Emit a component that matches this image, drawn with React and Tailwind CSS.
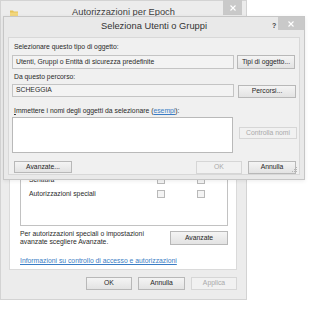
import React from 'react';

function Btn({ children, className = '', disabled }) {
  return (
    <div
      className={`flex shrink-0 items-center justify-center border text-[6.8px] leading-none ${
        disabled
          ? 'border-[#d6d6d6] bg-[#f1f1f1] text-[#a9a9a9]'
          : 'border-[#b8b8b8] bg-gradient-to-b from-[#f4f4f4] to-[#e3e3e3] text-[#262626]'
      } ${className}`}
    >
      {children}
    </div>
  );
}

function Close({ className = '' }) {
  return (
    <div className={`absolute flex items-center justify-center bg-[#c9c9c9] ${className}`}>
      <svg width="6" height="6" viewBox="0 0 6 6">
        <path d="M0.5 0.5 L5.5 5.5 M5.5 0.5 L0.5 5.5" stroke="#fff" strokeWidth="1.1" />
      </svg>
    </div>
  );
}

function Check() {
  return <div className="h-[8px] w-[8px] border border-[#b9b9b9] bg-[#f4f4f4]" />;
}

export default function App() {
  return (
    <div className="relative h-[320px] w-[319px] overflow-hidden bg-white font-['Liberation_Sans',Arial,sans-serif] text-[#2a2a2a]">
      {/* back window */}
      <div className="absolute left-0 top-0 flex h-[300px] w-[247px] flex-col border border-[#d3d3d3] bg-[#ececec]">
        <div className="relative flex h-[23px] shrink-0 items-center justify-center">
          <svg className="absolute left-[9px] top-[8px]" width="8" height="8" viewBox="0 0 8 8">
            <path d="M0 1.5 H3 L3.8 2.5 H8 V8 H0 Z" fill="#e6c35a" />
            <path d="M0 3.5 H8 V8 H0 Z" fill="#f2d77e" />
          </svg>
          <span className="text-[9.3px] leading-none text-[#3d3d3d]">Autorizzazioni per Epoch</span>
          <Close className="right-[4px] top-[-1px] h-[15px] w-[19px]" />
        </div>

        <div className="ml-[8px] flex h-[246px] w-[228px] flex-col border border-[#dadada] bg-white">
          <div className="ml-[10px] mt-[95px] flex h-[106px] w-[208px] flex-col justify-end border border-[#c2c2c2] pb-[24px]">
            {['Scrittura', 'Autorizzazioni speciali'].map(r => (
              <div key={r} className="grid h-[14px] grid-cols-[136px_40px_1fr] items-center">
                <span className="pl-[8px] text-[6.8px] leading-none">{r}</span>
                <Check />
                <Check />
              </div>
            ))}
          </div>
          <div className="ml-[10px] mt-[4px] flex w-[208px] items-start justify-between">
            <p className="text-[6.8px] leading-[8px]">
              Per autorizzazioni speciali o impostazioni
              <br />
              avanzate scegliere Avanzate.
            </p>
            <Btn className="mt-[1px] h-[14px] w-[58px]">Avanzate</Btn>
          </div>
          <p className="ml-[10px] mt-[11px] text-[6.8px] leading-[8px] text-[#3a7cc4] underline">
            Informazioni su controllo di accesso e autorizzazioni
          </p>
        </div>

        <div className="mt-[7px] flex justify-end gap-[6px] pr-[9px]">
          <Btn className="h-[13px] w-[46px]">OK</Btn>
          <Btn className="h-[13px] w-[47px]">Annulla</Btn>
          <Btn disabled className="h-[13px] w-[46px]">Applica</Btn>
        </div>
      </div>

      {/* front dialog */}
      <div className="absolute left-[3px] top-[16px] flex h-[164px] w-[302px] flex-col border border-[#c6c6c6] bg-[#e9e9e9] shadow-[0_1px_4px_rgba(0,0,0,0.08)]">
        <div className="relative flex h-[20px] shrink-0 items-center justify-center">
          <span className="text-[9.3px] leading-none text-[#333]">Seleziona Utenti o Gruppi</span>
          <span className="absolute left-[268px] top-[5px] text-[7px] font-bold leading-none text-[#444]">?</span>
          <Close className="right-[0px] top-0 h-[13px] w-[26px]" />
        </div>

        <div className="relative ml-[4px] flex h-[138px] w-[292px] flex-col border border-[#d8d8d8] bg-[#f0f0f0]">
          <p className="ml-[5px] mt-[5px] text-[6.8px] leading-[8px]">Selezionare questo tipo di oggetto:</p>
          <div className="mt-[4px] flex">
            <div className="ml-[3px] flex h-[14px] w-[222px] items-center border border-[#c4c4c4] bg-[#f3f3f3] pl-[3px] text-[6.8px] leading-none">
              Utenti, Gruppi o Entità di sicurezza predefinite
            </div>
            <Btn className="ml-[3px] h-[14px] w-[58px]">Tipi di oggetto...</Btn>
          </div>

          <p className="ml-[5px] mt-[4px] text-[6.8px] leading-[8px]">Da questo percorso:</p>
          <div className="mt-[3px] flex items-start">
            <div className="ml-[3px] flex h-[13px] w-[222px] items-center border border-[#c4c4c4] bg-[#f3f3f3] pl-[3px] text-[6.8px] leading-none">
              SCHEGGIA
            </div>
            <Btn className="ml-[4px] mt-[1px] h-[13px] w-[58px]">Percorsi...</Btn>
          </div>

          <p className="ml-[5px] mt-[9px] text-[6.8px] leading-[8px]">
            <span className="underline">I</span>mmettere i nomi degli oggetti da selezionare (
            <span className="text-[#3a7cc4] underline">esempi</span>):
          </p>
          <div className="mt-[2px] flex items-start">
            <div className="ml-[3px] h-[36px] w-[221px] border border-[#b9b9b9] bg-white" />
            <Btn disabled className="ml-[6px] mt-[10px] h-[12px] w-[58px]">Controlla nomi</Btn>
          </div>

          <div className="mt-[8px] flex items-start">
            <Btn className="ml-[5px] h-[12px] w-[58px]">Avanzate...</Btn>
            <Btn disabled className="ml-[124px] h-[13px] w-[46px]">OK</Btn>
            <Btn className="ml-[6px] h-[13px] w-[48px]">Annulla</Btn>
          </div>

          <svg className="absolute bottom-[1px] right-[1px]" width="6" height="6" viewBox="0 0 6 6">
            <rect x="4" y="0" width="1" height="1" fill="#b5b5b5" />
            <rect x="2" y="2" width="1" height="1" fill="#b5b5b5" />
            <rect x="4" y="2" width="1" height="1" fill="#b5b5b5" />
            <rect x="0" y="4" width="1" height="1" fill="#b5b5b5" />
            <rect x="2" y="4" width="1" height="1" fill="#b5b5b5" />
            <rect x="4" y="4" width="1" height="1" fill="#b5b5b5" />
          </svg>
        </div>
      </div>
    </div>
  );
}
